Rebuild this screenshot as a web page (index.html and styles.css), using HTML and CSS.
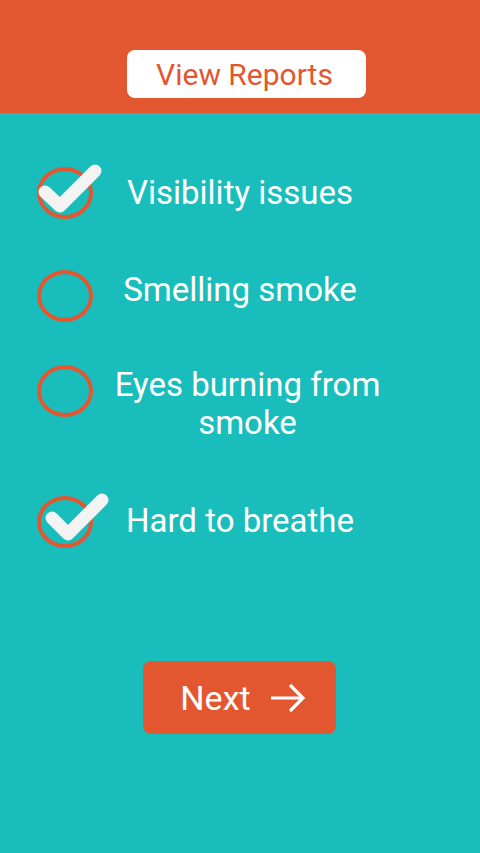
FILE: index.html
```html
<!DOCTYPE html>
<html>
<head>
<meta charset="utf-8">
<link rel="stylesheet" href="styles.css">
</head>
<body>
<header class="top">
  <button class="reports">View Reports</button>
</header>
<main class="list">
  <div class="row">
    <div class="box">
      <span class="ring"></span>
      <svg class="check" viewBox="0 0 80 60" width="80" height="60"><polyline points="8,25 23,39 58,4"/></svg>
    </div>
    <div class="label">Visibility issues</div>
  </div>
  <div class="row row-2">
    <div class="box"><span class="ring"></span></div>
    <div class="label">Smelling smoke</div>
  </div>
  <div class="row row-3">
    <div class="box"><span class="ring"></span></div>
    <div class="label label-wide">Eyes burning from smoke</div>
  </div>
  <div class="row row-4">
    <div class="box">
      <span class="ring"></span>
      <svg class="check" viewBox="0 0 80 60" width="80" height="60"><polyline points="15,22 31,38 65,4"/></svg>
    </div>
    <div class="label">Hard to breathe</div>
  </div>
</main>
<div class="actions">
  <button class="next">Next
    <svg class="arrow" viewBox="0 0 36 30" width="36" height="30"><path d="M1 15 H33 M20 2 L33 15 L20 28"/></svg>
  </button>
</div>
</body>
</html>
```
FILE: styles.css
```css
html, body {
  margin: 0;
  padding: 0;
}
body {
  width: 480px;
  height: 853px;
  background: #19bebc;
  font-family: Roboto, "Noto Sans", sans-serif;
  overflow: hidden;
}
.top {
  height: 113px;
  background: #e35730;
  display: flex;
  justify-content: center;
  align-items: flex-end;
  box-sizing: border-box;
  padding-bottom: 15px;
}
.reports {
  width: 239px;
  height: 48px;
  border: none;
  border-radius: 8px;
  background: #ffffff;
  color: #e35730;
  font-family: Roboto, sans-serif;
  font-size: 30px;
  padding: 0 4px 0 0;
  margin-left: 13px;
}
.list {
  padding: 54px 0 0 37px;
  display: flex;
  flex-direction: column;
}
.row {
  display: flex;
  align-items: flex-start;
}
.row-2 { margin-top: 51px; }
.row-3 { margin-top: 43px; }
.row-4 { margin-top: 54px; }
.box {
  position: relative;
  width: 56px;
  height: 52px;
  flex: none;
}
.ring {
  display: block;
  width: 56px;
  height: 52px;
  box-sizing: border-box;
  border: 4px solid #e35730;
  border-radius: 50%;
}
.check {
  position: absolute;
  left: 0;
  top: 0;
  overflow: visible;
}
.check polyline {
  fill: none;
  stroke: #f3f3f3;
  stroke-width: 13;
  stroke-linecap: round;
  stroke-linejoin: round;
}
.label {
  width: 280px;
  margin-left: 7px;
  color: #ffffff;
  font-size: 33px;
  line-height: 38px;
  text-align: center;
  margin-top: 7px;
}
.row-2 .label { margin-top: 1px; }
.row-3 .label { margin-top: 1px; }
.row-4 .label { margin-top: 6px; }
.label-wide {
  width: 295px;
}
.actions {
  display: flex;
  justify-content: center;
  margin-top: 113px;
}
.next {
  width: 193px;
  height: 73px;
  margin-left: -2px;
  border: none;
  border-radius: 8px;
  background: #e35730;
  color: #ffffff;
  font-family: Roboto, sans-serif;
  font-size: 34px;
  display: flex;
  align-items: center;
  justify-content: center;
  gap: 19px;
  padding: 0 0 0 8px;
}
.arrow {
  width: 36px;
  height: 30px;
}
.arrow path {
  fill: none;
  stroke: #ffffff;
  stroke-width: 3.2;
}
```
